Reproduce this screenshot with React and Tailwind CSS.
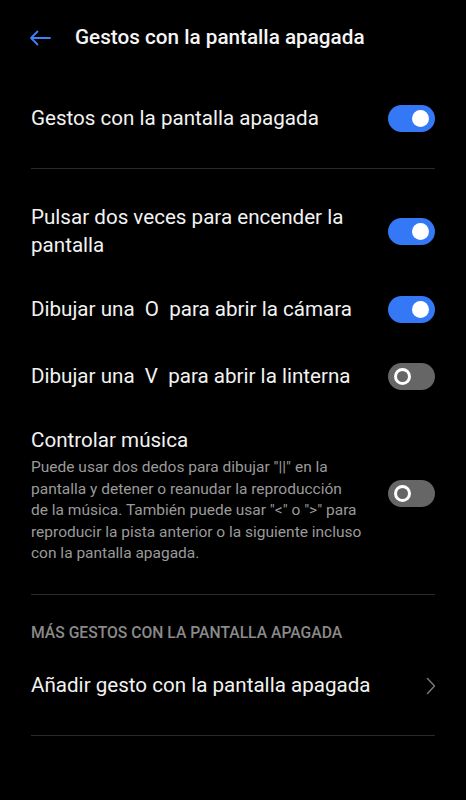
import React from "react";

function Toggle({ on }) {
  return on ? (
    <div className="w-[47px] h-[27px] rounded-full bg-[#3478f6] flex items-center justify-end px-[6px] shrink-0">
      <div className="w-[17px] h-[17px] rounded-full bg-white" />
    </div>
  ) : (
    <div className="w-[47px] h-[27px] rounded-full bg-[#666666] flex items-center justify-start px-[6px] shrink-0">
      <div className="w-[17px] h-[17px] rounded-full border-[3px] border-white bg-[#666666]" />
    </div>
  );
}

function Row({ children, on, className = "" }) {
  return (
    <div className={"flex items-center justify-between gap-4 " + className}>
      <div className="text-[20.6px] leading-[28px] text-[#f2f2f2]">{children}</div>
      <Toggle on={on} />
    </div>
  );
}

export default function App() {
  return (
    <div className="w-[466px] h-[800px] bg-black text-white font-['Roboto',sans-serif] overflow-hidden">
      {/* HEADER */}
      <header className="flex items-center h-[76px] pl-[29px]">
        <svg width="22" height="16" viewBox="0 0 22 16" fill="none" stroke="#3b82f6" strokeWidth="1.8" strokeLinecap="round" strokeLinejoin="round">
          <path d="M21 8H2M8.5 1.5L2 8l6.5 6.5" />
        </svg>
        <h1 className="ml-[24px] text-[20.7px] font-medium text-[#f5f5f5]">Gestos con la pantalla apagada</h1>
      </header>

      <div className="px-[31px]">
        <Row on className="h-[84px]">Gestos con la pantalla apagada</Row>
        <div className="h-px bg-[#2a2a2a] mt-[8px]" />

        <Row on className="pt-[34px]">
          Pulsar dos veces para encender la
          <br />
          pantalla
        </Row>
        <Row on className="mt-[36px]">Dibujar una&nbsp; O &nbsp;para abrir la cámara</Row>
        <Row on={false} className="mt-[39px]">Dibujar una&nbsp; V &nbsp;para abrir la linterna</Row>

        <div className="flex items-center justify-between gap-4 mt-[36px]">
          <div>
            <div className="text-[20.6px] leading-[28px] text-[#f2f2f2]">Controlar música</div>
            <p className="mt-[3px] text-[15.5px] leading-[21.5px] text-[#9a9a9a]">
              Puede usar dos dedos para dibujar "||" en la
              <br />
              pantalla y detener o reanudar la reproducción
              <br />
              de la música. También puede usar "&lt;" o "&gt;" para
              <br />
              reproducir la pista anterior o la siguiente incluso
              <br />
              con la pantalla apagada.
            </p>
          </div>
          <div className="mb-[4px]">
            <Toggle on={false} />
          </div>
        </div>

        <div className="h-px bg-[#2a2a2a] mt-[29px]" />

        <div className="pt-[28px] text-[15.7px] leading-[20px] font-medium text-[#8a8a8a]">MÁS GESTOS CON LA PANTALLA APAGADA</div>

        <div className="flex items-center justify-between h-[68px] mt-[9px]">
          <span className="text-[20.6px] text-[#f2f2f2]">Añadir gesto con la pantalla apagada</span>
          <svg width="10" height="18" viewBox="0 0 10 18" fill="none" stroke="#777" strokeWidth="1.5" strokeLinecap="round" strokeLinejoin="round" className="mr-[-1px]">
            <path d="M1.5 1.5L8.5 9l-7 7.5" />
          </svg>
        </div>
        <div className="h-px bg-[#2a2a2a] mt-[15px]" />
      </div>
    </div>
  );
}
